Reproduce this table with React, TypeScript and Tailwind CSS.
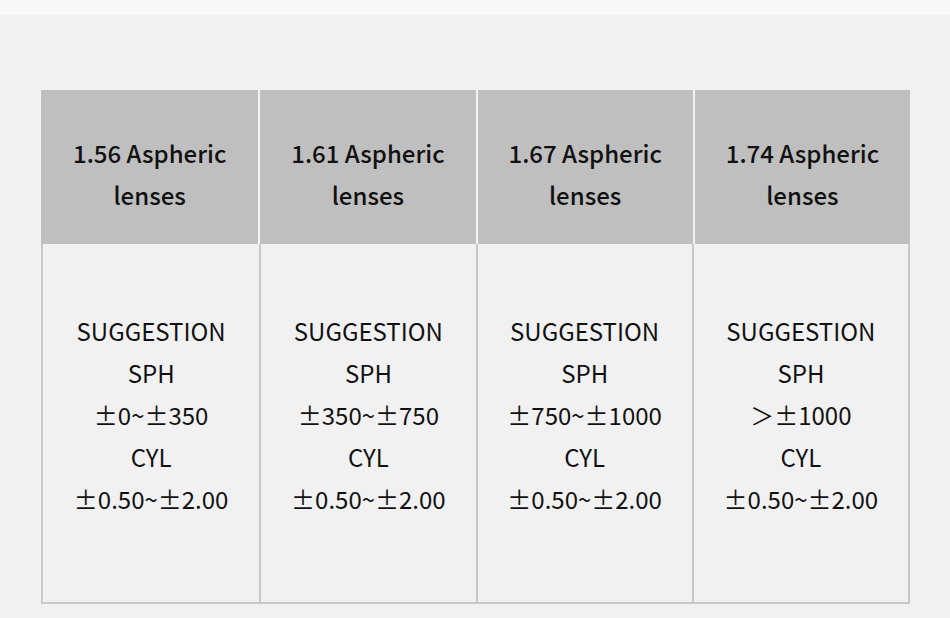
import React from 'react'

const lenses = [
  { name: '1.56 Aspheric', sph: '±0~±350' },
  { name: '1.61 Aspheric', sph: '±350~±750' },
  { name: '1.67 Aspheric', sph: '±750~±1000' },
  { name: '1.74 Aspheric', sph: '＞±1000' },
]

const App: React.FC = () => {
  return (
    <div
      className="w-[950px] h-[618px] bg-[#f1f1f1] text-[#111]"
      style={{ fontFamily: '"Noto Sans CJK JP", "Noto Sans", sans-serif' }}
    >
      <div className="h-[15px] bg-[#f8f8f6]" />

      <div className="ml-[41px] mt-[75px] w-[869px]">
        <div className="grid grid-cols-4 bg-[#bfbfbf] h-[154px]">
          {lenses.map((lens, i) => (
            <div
              key={lens.name}
              className={`flex flex-col items-center justify-center pt-[14px] text-[24px] leading-[42px] font-medium ${
                i > 0 ? 'border-l-2 border-[#f4f4f4]' : ''
              }`}
            >
              <span>{lens.name}</span>
              <span>lenses</span>
            </div>
          ))}
        </div>

        <div className="grid grid-cols-4 h-[360px] border-2 border-t-0 border-[#c8c8c8]">
          {lenses.map((lens, i) => (
            <div
              key={lens.name}
              className={`flex flex-col items-center justify-center pb-[16px] text-[24px] leading-[42px] ${
                i > 0 ? 'border-l-2 border-[#c8c8c8]' : ''
              }`}
            >
              <span>SUGGESTION</span>
              <span>SPH</span>
              <span>{lens.sph}</span>
              <span>CYL</span>
              <span>±0.50~±2.00</span>
            </div>
          ))}
        </div>
      </div>
    </div>
  )
}

export default App
